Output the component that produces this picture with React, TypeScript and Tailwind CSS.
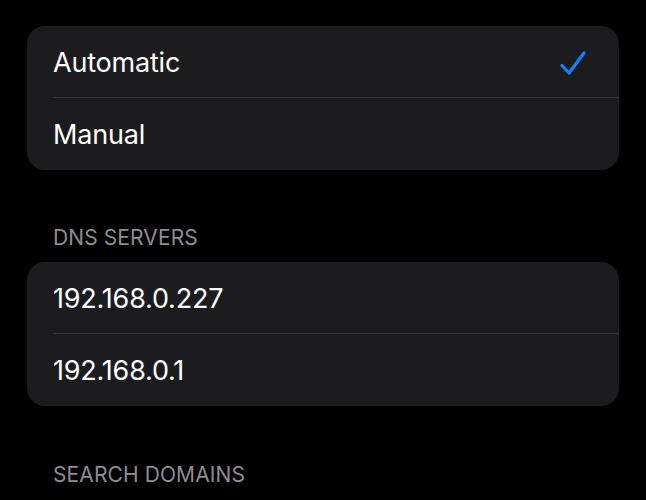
import { Fragment } from "react";

type Row = { label: string; checked?: boolean };

const modes: Row[] = [{ label: "Automatic", checked: true }, { label: "Manual" }];
const servers: Row[] = [{ label: "192.168.0.227" }, { label: "192.168.0.1" }];

function Check() {
    return (
        <svg width="26" height="24" viewBox="0 0 26 24" fill="none">
            <path
                d="M2 14.5 L9 22 L24 2"
                stroke="#0a84ff"
                strokeWidth="3.2"
                strokeLinecap="round"
                strokeLinejoin="round"
            />
        </svg>
    );
}

function Group({ rows }: { rows: Row[] }) {
    return (
        <div className="rounded-[18px] bg-[#1c1c1e] pl-[26px]">
            {rows.map((row, i) => (
                <Fragment key={row.label}>
                    <div
                        className={[
                            "flex h-[72px] items-center justify-between pt-[3px] pr-[33px] text-[27px] tracking-[-0.2px] text-white",
                            i < rows.length - 1 ? "border-b border-[#38383a]" : "",
                        ].join(" ")}
                    >
                        <span>{row.label}</span>
                        {row.checked && <Check />}
                    </div>
                </Fragment>
            ))}
        </div>
    );
}

function Header({ children }: { children: string }) {
    return (
        <div className="pl-[26px] text-[21px] leading-[24px] text-[#8d8d93] tracking-[0.1px]">
            {children}
        </div>
    );
}

export default function App() {
    return (
        <div className="h-[500px] overflow-hidden bg-black px-[27px] pt-[26px] font-['Inter',sans-serif]">
            <Group rows={modes} />

            <div className="mt-[56px] mb-[12px]">
                <Header>DNS SERVERS</Header>
            </div>
            <Group rows={servers} />

            <div className="mt-[57px]">
                <Header>SEARCH DOMAINS</Header>
            </div>
        </div>
    );
}
